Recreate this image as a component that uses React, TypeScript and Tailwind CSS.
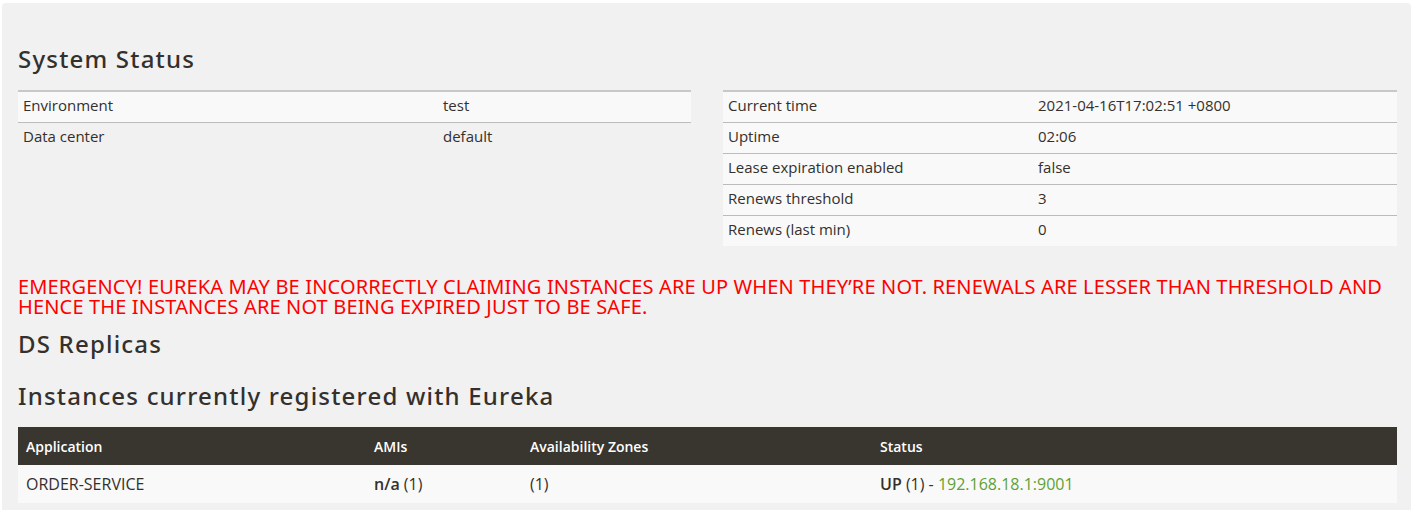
const SYS_LEFT = [
  ['Environment', 'test'],
  ['Data center', 'default'],
]

const SYS_RIGHT = [
  ['Current time', '2021-04-16T17:02:51 +0800'],
  ['Uptime', '02:06'],
  ['Lease expiration enabled', 'false'],
  ['Renews threshold', '3'],
  ['Renews (last min)', '0'],
]

const heading =
  "text-[24px] leading-[30px] font-medium tracking-[1.2px] text-[#34302d] [font-family:'Noto_Sans',sans-serif]"

function InfoTable({ rows, labelWidth, striped }: { rows: string[][]; labelWidth: string; striped: boolean }) {
  return (
    <table className="w-full border-collapse border-t-2 border-[#c8c8c8] text-[15px] text-[#34302d] [font-family:'Open_Sans',sans-serif]">
      <tbody>
        {rows.map(([label, value], i) => (
          <tr
            key={label}
            className={
              (striped ? (i % 2 === 0 ? 'bg-[#f9f9f9]' : '') : 'bg-[#f9f9f9]') +
              (i < rows.length - 1 ? ' border-b border-[#bcbcbc]' : '')
            }
          >
            <td className={`${labelWidth} h-[31px] px-[5px] pb-[3px]`}>{label}</td>
            <td className="h-[31px] px-[5px] pb-[3px]">{value}</td>
          </tr>
        ))}
      </tbody>
    </table>
  )
}

export default function App() {
  return (
    <div className="min-h-[510px] bg-white pl-[2px] pr-[2px] pt-[3px]">
      <div className="min-h-[507px] rounded-t-[4px] bg-[#f1f1f1] pl-[16px] pr-[14px] pt-[41px]">
        <h2 className={heading}>System Status</h2>

        <div className="mt-[16px] flex gap-[32px]">
          <div className="w-[673px]">
            <InfoTable rows={SYS_LEFT} labelWidth="w-[420px]" striped />
          </div>
          <div className="flex-1">
            <InfoTable rows={SYS_RIGHT} labelWidth="w-[310px]" striped={false} />
          </div>
        </div>

        <p className="mt-[31px] text-[20px] leading-[20px] tracking-[0.15px] uppercase text-[#ff0000] [font-family:'Noto_Sans',sans-serif]">
          Emergency! Eureka may be incorrectly claiming instances are up when they’re not. Renewals are lesser than
          threshold and hence the instances are not being expired just to be safe.
        </p>

        <h2 className={`mt-[12px] ${heading}`}>DS Replicas</h2>

        <h2 className={`mt-[22px] ${heading}`}>Instances currently registered with Eureka</h2>

        <table className="mt-[16px] w-full border-collapse [font-family:'Open_Sans',sans-serif]">
          <thead>
            <tr className="bg-[#39362f] text-left text-[14px] text-white">
              <th className="h-[38px] w-[348px] px-[8px] font-semibold">Application</th>
              <th className="h-[38px] w-[156px] px-[8px] font-semibold">AMIs</th>
              <th className="h-[38px] w-[350px] px-[8px] font-semibold">Availability Zones</th>
              <th className="h-[38px] px-[8px] font-semibold">Status</th>
            </tr>
          </thead>
          <tbody>
            <tr className="bg-[#f9f9f9] text-[16px] text-[#34302d]">
              <td className="h-[38px] px-[8px]">ORDER-SERVICE</td>
              <td className="h-[38px] px-[8px]">
                <b className="font-semibold">n/a</b> (1)
              </td>
              <td className="h-[38px] px-[8px]">(1)</td>
              <td className="h-[38px] px-[8px]">
                <b className="font-semibold">UP</b> (1) - <a className="text-[#5fa134]">192.168.18.1:9001</a>
              </td>
            </tr>
          </tbody>
        </table>
      </div>
    </div>
  )
}
